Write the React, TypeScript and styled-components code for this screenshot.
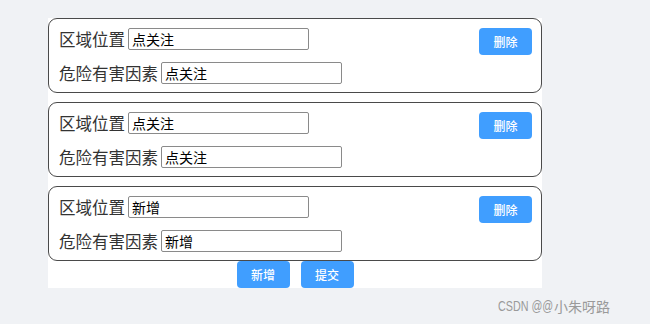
import React from 'react';
import styled, { createGlobalStyle } from 'styled-components';

const GlobalStyle = createGlobalStyle`
  body {
    margin: 0;
    background: #f0f2f5;
    font-family: "Noto Sans CJK SC", "Noto Sans", sans-serif;
  }
`;

const Page = styled.div`
  position: relative;
  width: 650px;
  height: 324px;
  padding-top: 18px;
  box-sizing: border-box;
`;

const Panel = styled.div`
  margin-left: 48px;
  width: 494px;
  background: #fff;
`;

const Card = styled.div`
  display: flex;
  justify-content: space-between;
  align-items: flex-start;
  border: 1px solid #4a4a4a;
  border-radius: 9px;
  padding: 9px 9px 8px 10px;
  & + & {
    margin-top: 9px;
  }
`;

const Fields = styled.div`
  display: flex;
  flex-direction: column;
  gap: 12px;
`;

const Row = styled.div`
  display: flex;
  align-items: center;
  height: 22px;
`;

const Label = styled.span`
  font-size: 16.5px;
  color: #333;
  line-height: 22px;
`;

const Input = styled.input`
  width: 181px;
  height: 22px;
  margin-left: 3px;
  box-sizing: border-box;
  border: 1px solid #8a8a8a;
  border-radius: 2px;
  padding: 0 3px;
  font-family: inherit;
  font-size: 14px;
  color: #000;
  outline: none;
`;

const Button = styled.button`
  width: 53px;
  height: 27px;
  border: none;
  border-radius: 4px;
  background: #409eff;
  color: #fff;
  font-family: inherit;
  font-size: 12px;
  font-weight: 500;
  padding: 0;
`;

const Actions = styled.div`
  display: flex;
  justify-content: center;
  gap: 11px;
  height: 27px;
`;

const Watermark = styled.div`
  position: absolute;
  right: 40px;
  top: 296px;
  display: flex;
  align-items: center;
  color: #9a9a9a;
  font-size: 14px;
`;

const Site = styled.span`
  display: inline-block;
  width: 56px;
  white-space: nowrap;
  font-family: "Liberation Sans", sans-serif;
  font-size: 14.5px;
  transform: scaleX(0.74);
  transform-origin: left center;
`;

const items = [
  { area: '点关注', hazard: '点关注' },
  { area: '点关注', hazard: '点关注' },
  { area: '新增', hazard: '新增' },
];

const App = (): JSX.Element => (
  <>
    <GlobalStyle />
    <Page>
      <Panel>
        {items.map((item, i) => (
          <Card key={i}>
            <Fields>
              <Row>
                <Label>区域位置</Label>
                <Input defaultValue={item.area} />
              </Row>
              <Row>
                <Label>危险有害因素</Label>
                <Input defaultValue={item.hazard} />
              </Row>
            </Fields>
            <Button>删除</Button>
          </Card>
        ))}
        <Actions>
          <Button>新增</Button>
          <Button>提交</Button>
        </Actions>
      </Panel>
      <Watermark>
        <Site>CSDN @@</Site>
        小朱呀路
      </Watermark>
    </Page>
  </>
);

export default App;
